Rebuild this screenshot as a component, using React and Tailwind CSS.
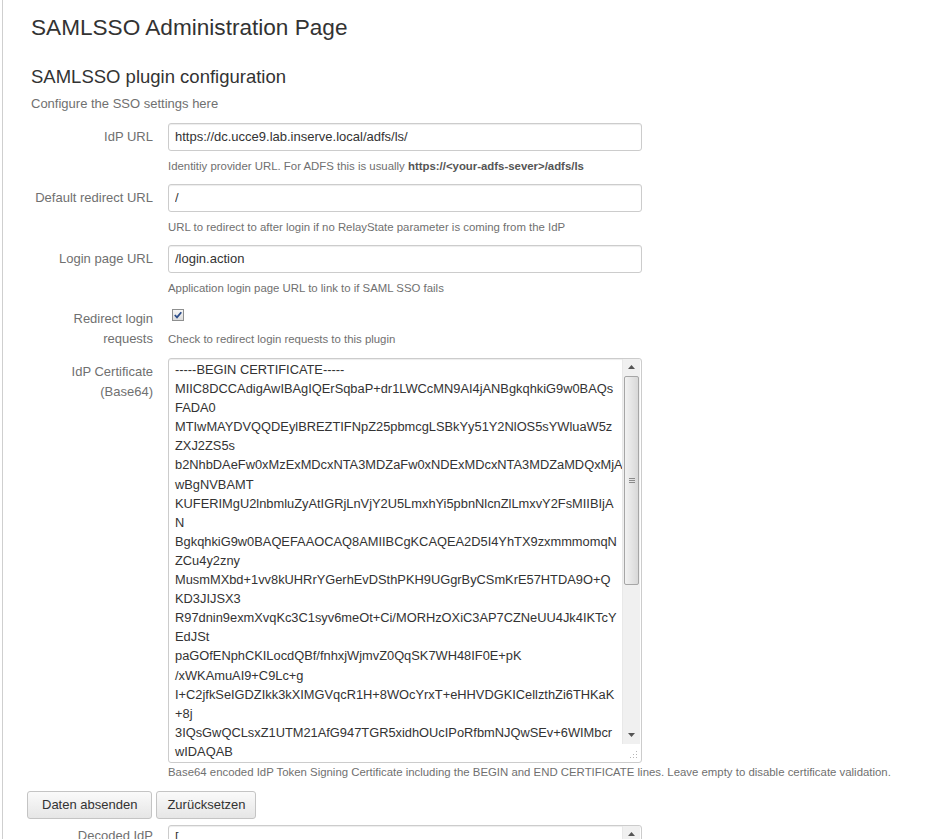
import React from 'react';

const certLines = [
  '-----BEGIN CERTIFICATE-----',
  'MIIC8DCCAdigAwIBAgIQErSqbaP+dr1LWCcMN9AI4jANBgkqhkiG9w0BAQs',
  'FADA0',
  'MTIwMAYDVQQDEylBREZTIFNpZ25pbmcgLSBkYy51Y2NlOS5sYWluaW5z',
  'ZXJ2ZS5s',
  'b2NhbDAeFw0xMzExMDcxNTA3MDZaFw0xNDExMDcxNTA3MDZaMDQxMjA',
  'wBgNVBAMT',
  'KUFERIMgU2lnbmluZyAtIGRjLnVjY2U5LmxhYi5pbnNlcnZlLmxvY2FsMIIBIjA',
  'N',
  'BgkqhkiG9w0BAQEFAAOCAQ8AMIIBCgKCAQEA2D5I4YhTX9zxmmmomqN',
  'ZCu4y2zny',
  'MusmMXbd+1vv8kUHRrYGerhEvDSthPKH9UGgrByCSmKrE57HTDA9O+Q',
  'KD3JIJSX3',
  'R97dnin9exmXvqKc3C1syv6meOt+Ci/MORHzOXiC3AP7CZNeUU4Jk4IKTcY',
  'EdJSt',
  'paGOfENphCKILocdQBf/fnhxjWjmvZ0QqSK7WH48IF0E+pK',
  '/xWKAmuAI9+C9Lc+g',
  'I+C2jfkSeIGDZIkk3kXIMGVqcR1H+8WOcYrxT+eHHVDGKICellzthZi6THKaK',
  '+8j',
  '3IQsGwQCLsxZ1UTM21AfG947TGR5xidhOUcIPoRfbmNJQwSEv+6WIMbcr',
  'wIDAQAB',
];

const decodedLines = [
  '[',
  '[',
  '  Version: V3',
  '  Subject: CN=ADFS Signing - dc.ucce9.lab.inserve.local',
  '  Signature Algorithm: SHA256withRSA',
  '  Key:  Sun RSA public key, 2048 bits',
  '  public exponent: 65537',
  '  Validity: [From: Thu Nov 07 16:07:06 CET 2013,',
];

const Arrow = ({ down }) => (
  <div className="h-[17px] flex items-center justify-center">
    <svg width="7" height="4" viewBox="0 0 7 4">
      {down ? <path d="M0 0 H7 L3.5 4 Z" fill="#555" /> : <path d="M0 4 H7 L3.5 0 Z" fill="#555" />}
    </svg>
  </div>
);

const Scrollbar = ({ thumb }) => (
  <div className="w-[18px] mr-[1px] flex flex-col bg-[#f0f0f0] border-l border-[#e8e8e8]">
    <Arrow />
    {thumb && (
      <div className="h-[209px] mx-[1px] rounded-[2px] border border-[#a6a6a6] bg-gradient-to-r from-[#f2f2f2] to-[#d8d8d8] flex items-center justify-center">
        <div className="flex flex-col gap-[1px]">
          <div className="w-[6px] h-[1px] bg-[#8a8a8a]" />
          <div className="w-[6px] h-[1px] bg-[#8a8a8a]" />
          <div className="w-[6px] h-[1px] bg-[#8a8a8a]" />
        </div>
      </div>
    )}
    <div className="flex-1" />
    <Arrow down />
  </div>
);

const Grip = () => (
  <svg width="10" height="10" viewBox="0 0 10 10" className="absolute right-[3px] bottom-[3px]">
    <rect x="8" y="2" width="1" height="1" fill="#b5b5b5" />
    <rect x="8" y="5" width="1" height="1" fill="#b5b5b5" />
    <rect x="8" y="8" width="1" height="1" fill="#b5b5b5" />
    <rect x="5" y="5" width="1" height="1" fill="#b5b5b5" />
    <rect x="5" y="8" width="1" height="1" fill="#b5b5b5" />
    <rect x="2" y="8" width="1" height="1" fill="#b5b5b5" />
  </svg>
);

const Label = ({ children, className = 'pt-[4px]' }) => (
  <div className={`w-[122px] shrink-0 text-right text-[13px] leading-[20px] text-[#707070] ${className}`}>{children}</div>
);

const Help = ({ children, className = '' }) => (
  <div className={`text-[11.4px] leading-[14px] text-[#707070] ${className}`}>{children}</div>
);

const TextRow = ({ label, value, help, className = '' }) => (
  <div className={`flex gap-[15px] ${className}`}>
    <Label>{label}</Label>
    <div>
      <input
        type="text"
        defaultValue={value}
        className="block h-[28px] w-[474px] rounded-[3px] border border-[#ccc] bg-white px-[6px] text-[13px] text-[#333] shadow-[inset_0_1px_1px_rgba(0,0,0,0.075)] outline-none"
      />
      <Help className="mt-[8px]">{help}</Help>
    </div>
  </div>
);

export default function App() {
  return (
    <div className="min-h-screen bg-white font-['Liberation_Sans',Arial,sans-serif]">
      <div className="ml-[2px] min-h-screen border-l border-[#cfcfcf] pl-[28px] pb-[40px]">
        <h1 className="pt-[13px] text-[22.6px] leading-[30px] text-[#333]">SAMLSSO Administration Page</h1>
        <h2 className="mt-[22px] text-[18.5px] leading-[24px] text-[#333]">SAMLSSO plugin configuration</h2>
        <p className="mt-[6px] text-[13px] leading-[18px] text-[#707070]">Configure the SSO settings here</p>

        <div className="mt-[9.5px]">
          <TextRow
            label="IdP URL"
            value="https://dc.ucce9.lab.inserve.local/adfs/ls/"
            help={
              <>
                Identitiy provider URL. For ADFS this is usually{' '}
                <b className="font-bold text-[#555]">https://&lt;your-adfs-sever&gt;/adfs/ls</b>
              </>
            }
          />
          <TextRow
            className="mt-[11px]"
            label="Default redirect URL"
            value="/"
            help="URL to redirect to after login if no RelayState parameter is coming from the IdP"
          />
          <TextRow
            className="mt-[11px]"
            label="Login page URL"
            value="/login.action"
            help="Application login page URL to link to if SAML SSO fails"
          />

          <div className="mt-[10px] flex gap-[15px]">
            <Label>Redirect login requests</Label>
            <div className="pt-[4px]">
              <div className="ml-[4px] h-[12px] w-[12px] border border-[#8e8f8f] bg-gradient-to-b from-[#f6f6f6] to-[#dcdcdc] flex items-center justify-center">
                <svg width="10" height="10" viewBox="0 0 10 10">
                  <path d="M1.8 5 L4 7.4 L8.3 2.2" fill="none" stroke="#2c4d8a" strokeWidth="1.8" />
                </svg>
              </div>
              <Help className="mt-[11px]">Check to redirect login requests to this plugin</Help>
            </div>
          </div>

          <div className="mt-[9px] flex gap-[15px]">
            <Label>IdP Certificate (Base64)</Label>
            <div>
              <div className="relative flex h-[405px] w-[474px] rounded-[3px] border border-[#ccc] bg-white shadow-[inset_0_1px_1px_rgba(0,0,0,0.075)]">
                <div className="flex-1 overflow-hidden pl-[6px] pt-[1.5px] text-[12.85px] leading-[19.1px] text-[#333]">
                  {certLines.map((l, i) => (
                    <div key={i} className="whitespace-pre">{l}</div>
                  ))}
                </div>
                <div className="h-[385px] flex">
                  <Scrollbar thumb />
                </div>
                <Grip />
              </div>
              <Help className="mt-[2px]">
                Base64 encoded IdP Token Signing Certificate including the BEGIN and END CERTIFICATE lines. Leave empty to disable certificate validation.
              </Help>
            </div>
          </div>

          <div className="-ml-[4px] mt-[12px] flex gap-[4px]">
            <button className="h-[28px] rounded-[3px] border border-[#c4c4c4] bg-gradient-to-b from-[#fafafa] to-[#e6e6e6] px-[14px] text-[13px] text-[#333]">
              Daten absenden
            </button>
            <button className="h-[28px] rounded-[3px] border border-[#c4c4c4] bg-gradient-to-b from-[#fafafa] to-[#e6e6e6] px-[10px] text-[13px] text-[#333]">
              Zurücksetzen
            </button>
          </div>

          <div className="mt-[6px] flex gap-[15px]">
            <Label className="pt-[1px]">Decoded IdP Certificate</Label>
            <div className="relative flex h-[200px] w-[474px] rounded-[3px] border border-[#ccc] bg-white shadow-[inset_0_1px_1px_rgba(0,0,0,0.075)]">
              <div className="flex-1 overflow-hidden pl-[6px] pt-[1.5px] text-[12.85px] leading-[19.1px] text-[#333]">
                {decodedLines.map((l, i) => (
                  <div key={i} className="whitespace-pre">{l}</div>
                ))}
              </div>
              <div className="h-[180px] flex">
                <Scrollbar thumb={false} />
              </div>
            </div>
          </div>
        </div>
      </div>
    </div>
  );
}
